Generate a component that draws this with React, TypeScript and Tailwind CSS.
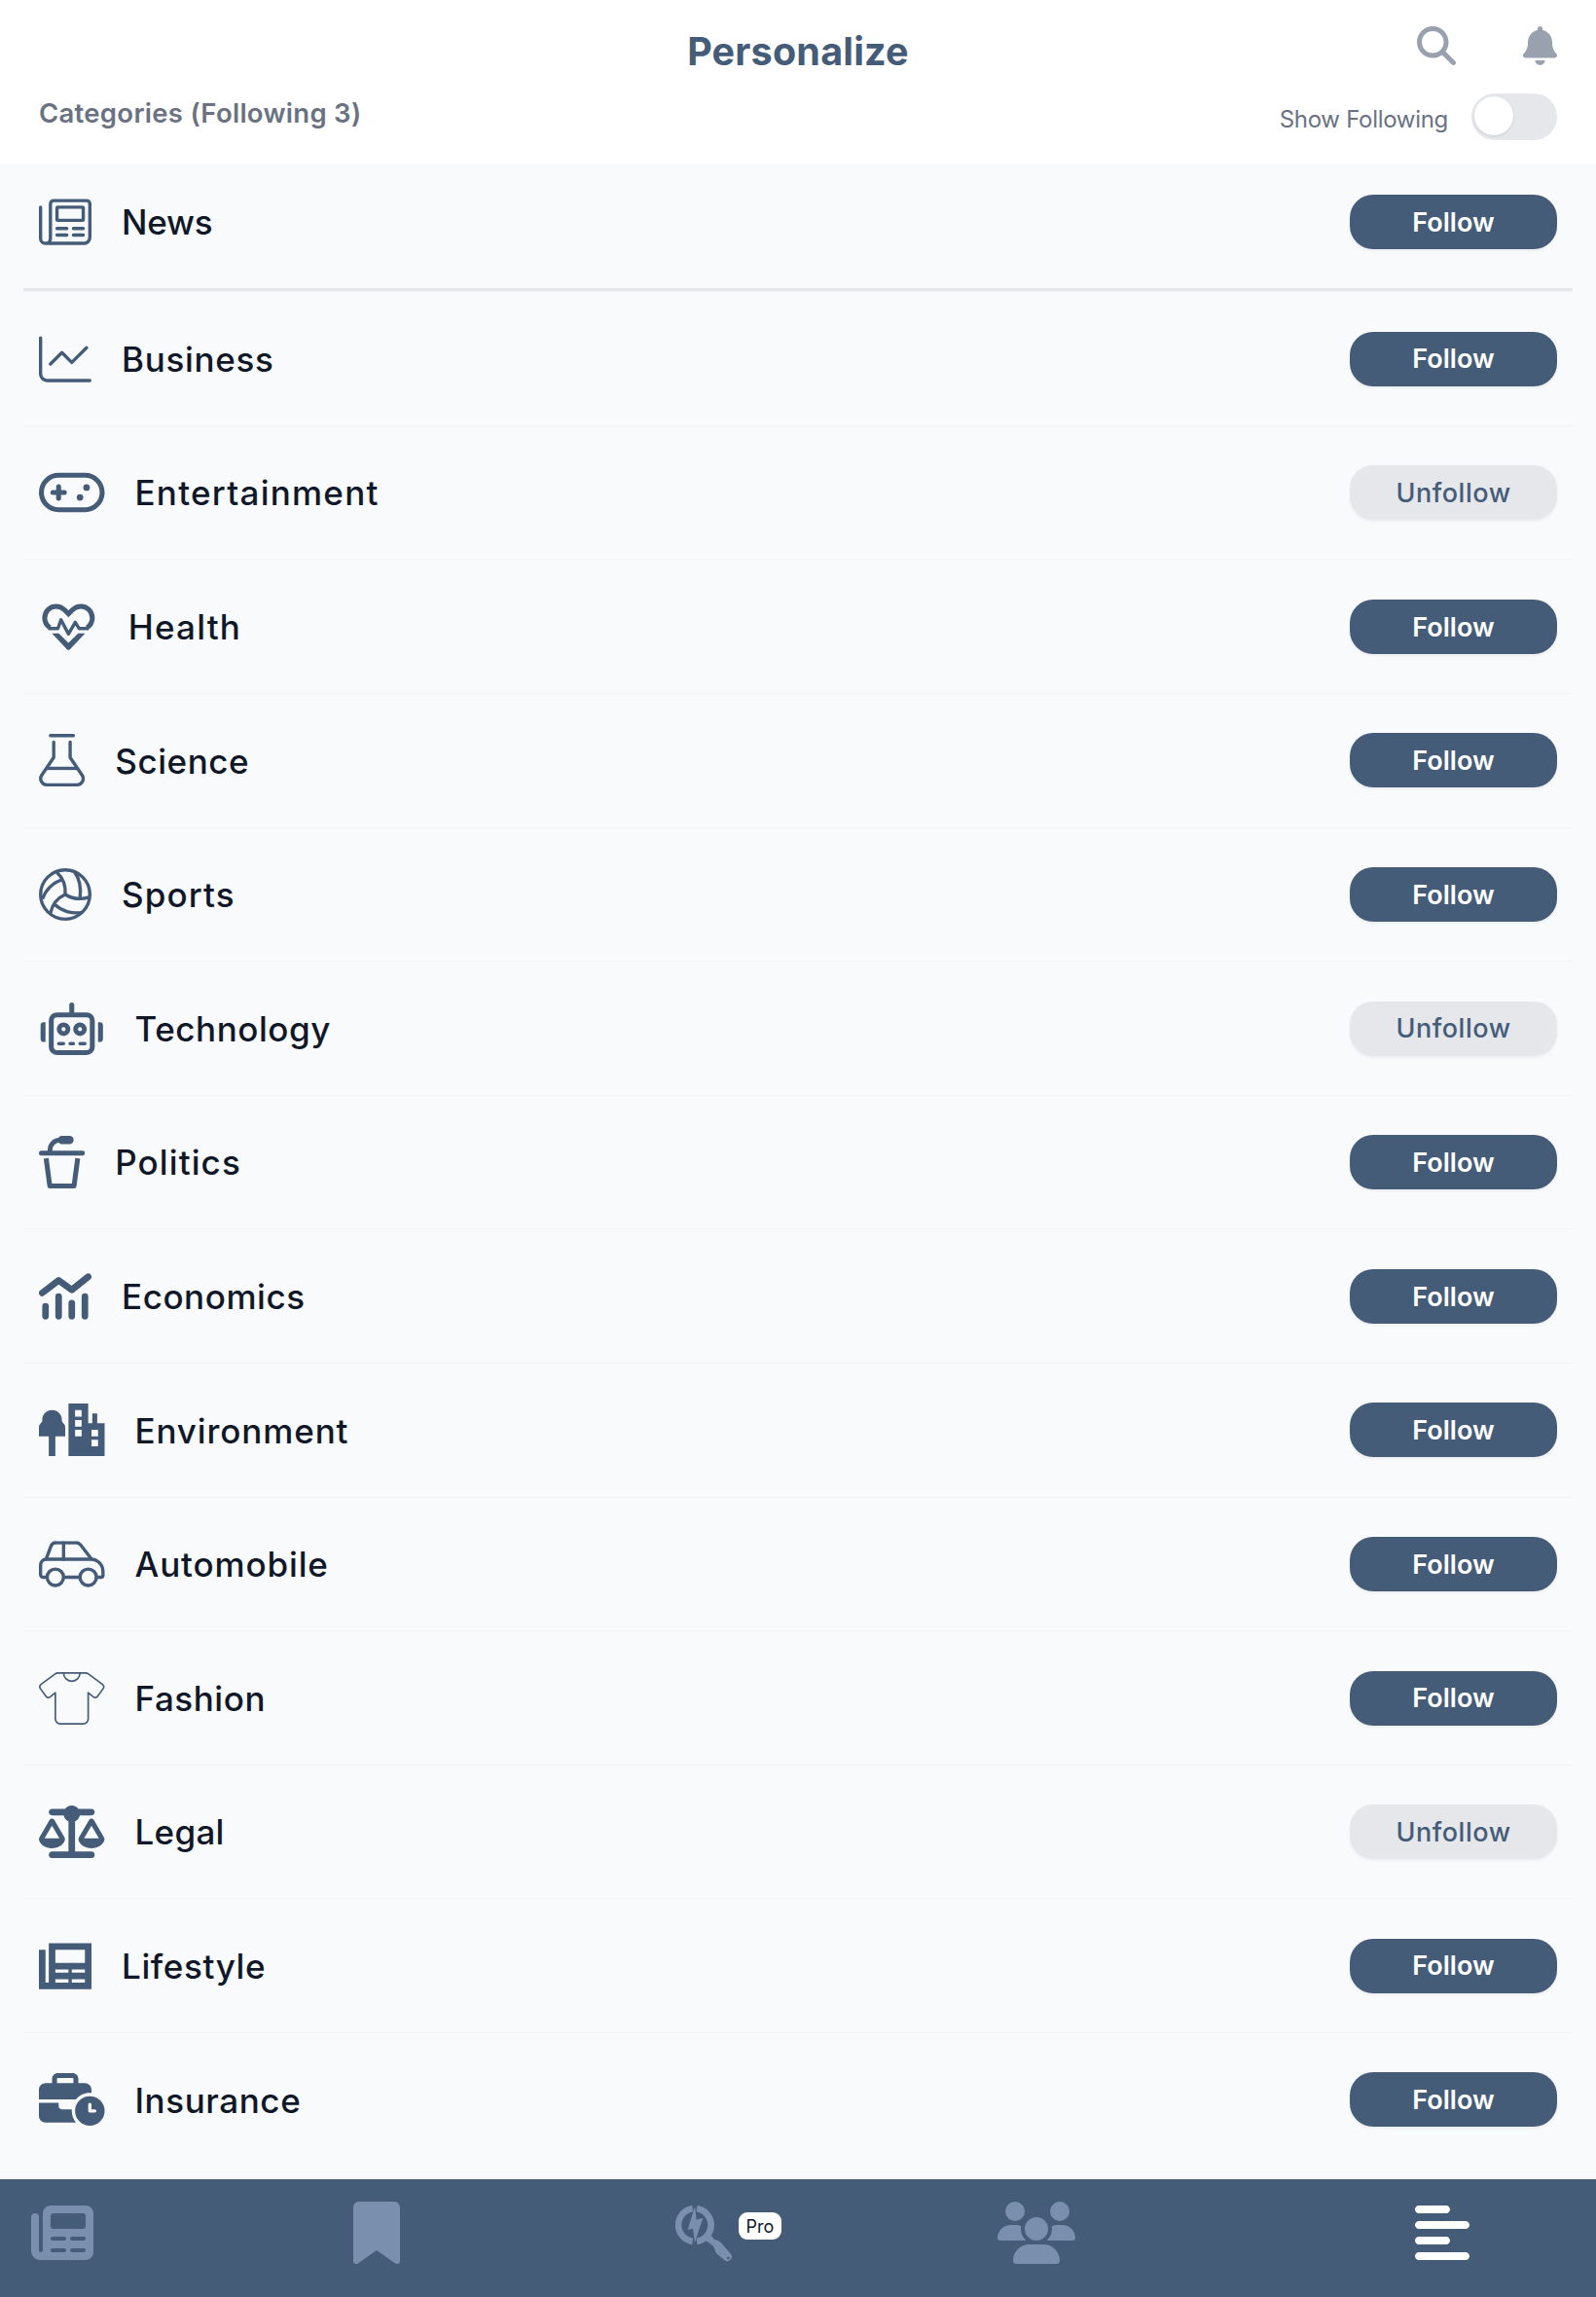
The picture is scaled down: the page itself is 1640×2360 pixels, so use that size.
import React from "react";
import {
  FaAlignLeft,
  FaBell,
  FaBookmark,
  FaMagnifyingGlass,
  FaScaleBalanced,
  FaBusinessTime,
  FaUsers,
} from "react-icons/fa6";

type GlyphProps = { w: number; className: string; children: React.ReactNode };

function Glyph({ w, className, children }: GlyphProps) {
  return (
    <svg
      viewBox={`0 0 ${w} 512`}
      className={className}
      fill="none"
      stroke="currentColor"
      strokeWidth={32}
      strokeLinecap="round"
      strokeLinejoin="round"
      aria-hidden="true"
    >
      {children}
    </svg>
  );
}

const W448 = "h-[54px] w-[47.25px] shrink-0";
const W512 = "h-[54px] w-[54px] shrink-0";
const W576 = "h-[54px] w-[60.75px] shrink-0";
const W640 = "h-[54px] w-[67.5px] shrink-0";

const NewsIcon = () => (
  <Glyph w={512} className={W512}>
    <path d="M16 112V416a48 48 0 0 0 96 0V80a32 32 0 0 1 32-32H464a32 32 0 0 1 32 32V408a56 56 0 0 1-56 56H64" />
    <rect x="176" y="112" width="256" height="128" rx="8" />
    <path d="M176 320h96M336 320h96M176 384h96M336 384h96" />
  </Glyph>
);

const ChartLineIcon = () => (
  <Glyph w={512} className={W512}>
    <path d="M16 48V400a64 64 0 0 0 64 64H496" />
    <path d="M112 304L224 192L320 288L464 144" />
  </Glyph>
);

const GamepadIcon = () => (
  <Glyph w={640} className={W640}>
    <rect x="24" y="88" width="592" height="336" rx="168" strokeWidth={48} />
    <path d="M136 256H248M192 200V312" strokeWidth={48} />
    <g fill="currentColor" stroke="none">
      <circle cx="464" cy="208" r="32" />
      <circle cx="400" cy="304" r="32" />
    </g>
  </Glyph>
);

const HeartIcon = () => (
  <Glyph w={576} className={W576}>
    <g strokeLinecap="butt" strokeLinejoin="miter">
      <path
        strokeWidth={48}
        d="M106 264C74 240 56 208 56 170C56 106 104 56 166 56C198 56 226 68 248 90L288 129L328 90C350 68 378 56 410 56C472 56 520 106 520 170C520 208 502 240 470 264"
      />
      <path strokeWidth={32} strokeLinejoin="round" d="M92 273H185L215 188L288 326L354 212L392 273H484" />
    </g>
    <path
      fill="currentColor"
      stroke="none"
      d="M126 319H194L288 412L382 319H450L304 473a22 22 0 0 1-32 0Z"
    />
  </Glyph>
);

const FlaskIcon = () => (
  <Glyph w={448} className={W448}>
    <path d="M112 16H336" />
    <path d="M144 80V230L27 403A60 60 0 0 0 76 496H372A60 60 0 0 0 421 403L304 230V80" />
    <path d="M76 336H372" strokeLinecap="butt" />
  </Glyph>
);

const VolleyballIcon = () => (
  <Glyph w={512} className={W512}>
    <circle cx="256" cy="256" r="240" />
    <g strokeLinecap="butt">
      <path d="M256 256C262 170 230 90 176 42" />
      <path d="M256 256C330 304 420 304 490 284" />
      <path d="M256 256C180 290 128 360 112 440" />
      <path d="M346 36C400 110 412 200 400 290" />
      <path d="M222 114C140 136 66 210 34 300" />
      <path d="M156 356C220 416 320 448 420 430" />
    </g>
  </Glyph>
);

const RobotIcon = () => (
  <Glyph w={640} className={W640}>
    <path d="M320 24V110" strokeWidth={48} />
    <rect x="120" y="120" width="400" height="368" rx="56" strokeWidth={48} />
    <circle cx="240" cy="260" r="43" strokeWidth={46} />
    <circle cx="400" cy="260" r="43" strokeWidth={46} />
    <path d="M192 400h48M304 400h32M400 400h48" />
    <g fill="currentColor" stroke="none">
      <path d="M64 192V384H48a32 32 0 0 1-32-32V224a32 32 0 0 1 32-32z" />
      <path d="M576 192V384h16a32 32 0 0 0 32-32V224a32 32 0 0 0-32-32z" />
    </g>
  </Glyph>
);

const PodiumIcon = () => (
  <Glyph w={448} className={W448}>
    <path d="M24 168H424" strokeWidth={48} />
    <path d="M108 160V140C108 84 150 40 210 40" strokeWidth={46} />
    <path
      d="M176 40L200 8Q208 0 220 0H298a40 40 0 0 1 0 80H220Q208 80 200 72Z"
      fill="currentColor"
      stroke="none"
    />
    <path d="M70 220L106 488H342L378 220" strokeWidth={48} strokeLinecap="butt" />
  </Glyph>
);

const ChartMixedIcon = () => (
  <Glyph w={512} className={W512}>
    <g strokeWidth={64}>
      <path d="M32 222L192 100L320 192L480 64" />
      <path d="M64 352V448M192 256V448M320 320V448M448 256V448" />
    </g>
  </Glyph>
);

const TreeCityIcon = () => (
  <Glyph w={640} className={W640}>
    <g fill="currentColor" stroke="none" fillRule="evenodd">
      <path d="M128 64C184 64 224 106 224 160V176L244 198Q256 212 256 228V320H160V512H96V320H0V228Q0 212 12 198L32 176V160C32 106 72 64 128 64Z" />
      <path d="M288 0H480V192H520V96H568V192H640V512H288ZM352 64V128H416V64ZM352 160V224H416V160ZM352 256V320H416V256ZM512 256V320H576V256ZM512 352V416H576V352Z" />
    </g>
  </Glyph>
);

const CarIcon = () => (
  <Glyph w={640} className={W640}>
    <path d="M80 384H40a24 24 0 0 1-24-24V264a56 56 0 0 1 56-56H504c68 0 120 54 120 122v34a20 20 0 0 1-20 20H560" />
    <path d="M70 208L117 82A52 52 0 0 1 166 48H362a56 56 0 0 1 44 21L510 204" />
    <path d="M240 48V208M240 384H400" />
    <circle cx="160" cy="384" r="80" />
    <circle cx="480" cy="384" r="80" />
  </Glyph>
);

const ShirtIcon = () => (
  <Glyph w={640} className={W640}>
    <g strokeWidth={16}>
      <path d="M188 8H452C464 8 476 12 486 20L620 120C634 130 636 148 626 160L572 234C562 250 544 252 530 240L480 200V456a48 48 0 0 1-48 48H208a48 48 0 0 1-48-48V200L110 240C96 252 78 250 68 234L14 160C4 148 6 130 20 120L154 20C164 12 176 8 188 8Z" />
      <path d="M240 8C240 56 276 88 320 88S400 56 400 8" />
    </g>
  </Glyph>
);

const NewsSharpIcon = () => (
  <Glyph w={512} className={W512}>
    <path
      fill="currentColor"
      stroke="none"
      fillRule="evenodd"
      d="M96 32H512V480H0V96H64V416H96ZM160 96V224H448V96ZM160 288V320H288V288ZM320 288V320H448V288ZM160 384V416H288V384ZM320 384V416H448V384Z"
    />
  </Glyph>
);

const NewsSolidIcon = () => (
  <svg viewBox="0 0 512 512" className="h-16 w-16" aria-hidden="true">
    <path
      fill="currentColor"
      fillRule="evenodd"
      d="M160 32H448a64 64 0 0 1 64 64V416a64 64 0 0 1-64 64H72a72 72 0 0 1-72-72V128a32 32 0 0 1 64 0V400a16 16 0 0 0 32 0V96a64 64 0 0 1 64-64ZM184 96a24 24 0 0 0-24 24V200a24 24 0 0 0 24 24H424a24 24 0 0 0 24-24V120a24 24 0 0 0-24-24ZM176 288a16 16 0 0 0 0 32H272a16 16 0 0 0 0-32ZM336 288a16 16 0 0 0 0 32H432a16 16 0 0 0 0-32ZM176 384a16 16 0 0 0 0 32H272a16 16 0 0 0 0-32ZM336 384a16 16 0 0 0 0 32H432a16 16 0 0 0 0-32Z"
    />
  </svg>
);

const PowerSearchIcon = () => (
  <svg viewBox="0 0 174 174" className="mt-0.5 h-[58px] w-[58px]" aria-hidden="true">
    <path d="M53 9.5A51 51 0 0 0 53 110.500" fill="none" stroke="currentColor" strokeWidth="20" />
    <path d="M66 9.5A51 51 0 0 1 66 110.500" fill="none" stroke="currentColor" strokeWidth="20" />
    <path
      d="M60 2L38 75L54 71L60 114L85 38L65 44Z"
      fill="currentColor"
      stroke="#455c78"
      strokeWidth="3"
      paintOrder="stroke"
    />
    <path
      fill="currentColor"
      fillRule="evenodd"
      d="M94 108L110 92L120 104Q132 106 141 115L171 150Q177 158 171 166Q164 175 155 171L128 149Q122 142 121 134Q118 125 108 118ZM163 158a4 4 0 1 0 .1 0Z"
    />
  </svg>
);

type Category = { name: string; icon: React.ReactNode; tracking: string; following?: boolean };

const featured: Category = { name: "News", icon: <NewsIcon />, tracking: "tracking-[-0.2px]" };

const categories: Category[] = [
  { name: "Business", icon: <ChartLineIcon />, tracking: "tracking-[0.7px]" },
  { name: "Entertainment", icon: <GamepadIcon />, tracking: "tracking-[1.25px]", following: true },
  { name: "Health", icon: <HeartIcon />, tracking: "tracking-[1.2px]" },
  { name: "Science", icon: <FlaskIcon />, tracking: "tracking-[0.55px]" },
  { name: "Sports", icon: <VolleyballIcon />, tracking: "tracking-[1.15px]" },
  { name: "Technology", icon: <RobotIcon />, tracking: "tracking-[0.55px]", following: true },
  { name: "Politics", icon: <PodiumIcon />, tracking: "tracking-[1.1px]" },
  { name: "Economics", icon: <ChartMixedIcon />, tracking: "tracking-[0.55px]" },
  { name: "Environment", icon: <TreeCityIcon />, tracking: "tracking-[0.88px]" },
  { name: "Automobile", icon: <CarIcon />, tracking: "tracking-[0.86px]" },
  { name: "Fashion", icon: <ShirtIcon />, tracking: "tracking-[0.55px]" },
  { name: "Legal", icon: <FaScaleBalanced className={W640} />, tracking: "tracking-[0.3px]", following: true },
  { name: "Lifestyle", icon: <NewsSharpIcon />, tracking: "tracking-[0.62px]" },
  { name: "Insurance", icon: <FaBusinessTime className={W640} />, tracking: "tracking-[0.58px]" },
];

function FollowButton({ following }: { following?: boolean }) {
  return following ? (
    <button className="ml-auto h-14 w-[213px] rounded-3xl bg-[#e5e7eb] pt-0.5 text-[27px] font-medium tracking-[0.54px] text-[#455c78] shadow-[0_1.5px_3px_rgba(0,0,0,0.05)]">
      Unfollow
    </button>
  ) : (
    <button className="ml-auto h-14 w-[213px] rounded-3xl bg-[#455c78] pt-0.5 text-[27px] font-semibold text-white shadow-[0_1.5px_3px_rgba(0,0,0,0.05)]">
      Follow
    </button>
  );
}

function RowContent({ item }: { item: Category }) {
  return (
    <>
      <span className="text-[#455c78]">{item.icon}</span>
      <span className={`ml-[31px] pt-px text-[35px] font-[450] text-gray-900 ${item.tracking}`}>{item.name}</span>
      <FollowButton following={item.following} />
    </>
  );
}

export default function App() {
  return (
    <div className="flex h-[2360px] w-[1640px] flex-col overflow-hidden bg-[#f9fafc] font-['Inter',sans-serif]">
      <header className="h-[168px] shrink-0 bg-white px-10">
        <div className="grid h-[94px] grid-cols-[1fr_auto_1fr] items-center">
          <span />
          <h1 className="pt-[11px] text-[39.5px] font-bold leading-[48px] tracking-[0.2px] text-[#455c78]">
            Personalize
          </h1>
          <div className="flex justify-end gap-[69px] text-gray-400">
            <FaMagnifyingGlass className="h-10 w-10" />
            <FaBell className="h-10 w-[35px]" />
          </div>
        </div>
        <div className="flex items-start justify-between text-gray-500">
          <h2 className="text-[27.5px] font-semibold leading-[44px] tracking-[0.28px]">
            Categories (Following 3)
          </h2>
          <label className="flex items-start gap-6">
            <span className="text-[24px] leading-[58px] tracking-[-0.3px]">Show Following</span>
            <span className="mt-0.5 flex h-12 w-[88px] rounded-full bg-gray-200 p-[3px]">
              <span className="h-10 w-10 rounded-full bg-white shadow-sm" />
            </span>
          </label>
        </div>
      </header>

      <main>
        <div className="flex h-[120px] items-center px-10">
          <RowContent item={featured} />
        </div>
        <div className="mx-6 mb-[0.3px] mt-2 h-1 border-b border-gray-100 bg-gray-200" />
        <ul className="mx-6">
          {categories.map((item) => (
            <li
              key={item.name}
              className="flex h-[137.6px] items-center border-b border-gray-100 px-4 last:border-transparent"
            >
              <RowContent item={item} />
            </li>
          ))}
        </ul>
      </main>

      <footer className="mt-auto grid h-[121.5px] shrink-0 grid-cols-[331px_331px_331px_429px_auto] items-center bg-[#455c78] pb-[10.5px] pl-8 text-[#7a8fae]">
        <NewsSolidIcon />
        <FaBookmark className="h-16 w-12" />
        <div className="flex items-center gap-[7px]">
          <PowerSearchIcon />
          <span className="mb-[14px] flex h-7 w-11 items-center justify-center rounded-[9px] bg-white text-[18px] text-gray-900">
            Pro
          </span>
        </div>
        <FaUsers className="h-16 w-20" />
        <FaAlignLeft className="h-16 w-14 text-white" />
      </footer>
    </div>
  );
}
